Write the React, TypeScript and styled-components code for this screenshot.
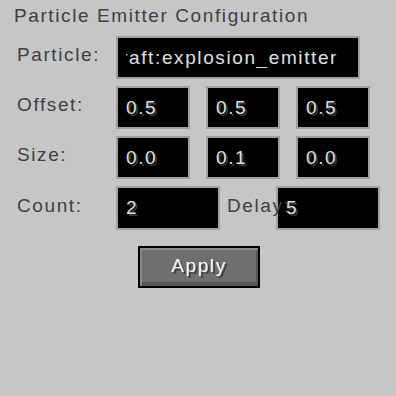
import * as React from "react";
import styled, { createGlobalStyle } from "styled-components";

const GlobalStyle = createGlobalStyle`
  html, body {
    margin: 0;
    padding: 0;
    background: #c6c6c6;
  }
  body {
    font-family: "Liberation Sans", Arial, sans-serif;
  }
`;

const Screen = styled.div`
  width: 396px;
  height: 396px;
  box-sizing: border-box;
  background: #c6c6c6;
  padding: 5px 0 0 14px;
  display: flex;
  flex-direction: column;
  font-family: "Liberation Sans", Arial, sans-serif;
  font-size: 19px;
  letter-spacing: 1.6px;
`;

const Title = styled.div`
  color: #404040;
  line-height: 22px;
  height: 22px;
  white-space: nowrap;
`;

const Form = styled.div`
  margin-top: 9px;
  padding-left: 3px;
  display: flex;
  flex-direction: column;
  gap: 7px;
`;

const Row = styled.div<{ $height?: number }>`
  display: flex;
  align-items: center;
  height: ${(p) => p.$height || 43}px;
`;

const Label = styled.div<{ $width?: number; $overlap?: number; $indent?: number }>`
  width: ${(p) => (p.$width ? `${p.$width}px` : "auto")};
  flex-shrink: 0;
  color: #404040;
  line-height: 20px;
  margin-top: -5px;
  margin-left: ${(p) => p.$indent || 0}px;
  margin-right: ${(p) => (p.$overlap ? -p.$overlap : 0)}px;
  white-space: nowrap;
  position: relative;
  z-index: 1;
`;

const Field = styled.div<{ $width: number; $gap?: number }>`
  box-sizing: border-box;
  width: ${(p) => p.$width}px;
  height: 100%;
  flex-shrink: 0;
  margin-left: ${(p) => p.$gap || 0}px;
  background: #000;
  border: 2px solid #a0a0a0;
  display: flex;
  align-items: center;
  padding: 0 8px;
  overflow: hidden;
`;

const Value = styled.span<{ $shadow?: boolean }>`
  color: #e0e0e0;
  white-space: nowrap;
  line-height: 20px;
  text-shadow: ${(p) => (p.$shadow ? "2px 2px 0 #383838" : "none")};
`;

const Clip = styled.div`
  width: 212px;
  overflow: hidden;
  display: flex;
  justify-content: flex-end;
`;

const ButtonRow = styled.div`
  display: flex;
  padding-left: 124px;
  margin-top: 16px;
`;

const Button = styled.button`
  box-sizing: border-box;
  width: 122px;
  height: 42px;
  border: 2px solid #000;
  background: #6f6f6f;
  box-shadow: inset 2px 2px 0 #8a8a8a, inset -2px -4px 0 #575757;
  color: #ffffff;
  font-family: "Liberation Sans", Arial, sans-serif;
  font-size: 19px;
  letter-spacing: 1.6px;
  text-shadow: 2px 2px 0 #3f3f3f;
  padding: 0 0 2px 0;
  cursor: pointer;
`;

export default function App() {
  return (
    <Screen>
      <GlobalStyle />
      <Title>Particle Emitter Configuration</Title>
      <Form>
        <Row>
          <Label $width={99}>Particle:</Label>
          <Field $width={244}>
            <Clip>
              <Value>minecraft:explosion_emitter</Value>
            </Clip>
          </Field>
        </Row>
        <Row>
          <Label $width={99}>Offset:</Label>
          <Field $width={74}><Value $shadow>0.5</Value></Field>
          <Field $width={74} $gap={16}><Value $shadow>0.5</Value></Field>
          <Field $width={74} $gap={16}><Value $shadow>0.5</Value></Field>
        </Row>
        <Row>
          <Label $width={99}>Size:</Label>
          <Field $width={74}><Value $shadow>0.0</Value></Field>
          <Field $width={74} $gap={16}><Value $shadow>0.1</Value></Field>
          <Field $width={74} $gap={16}><Value $shadow>0.0</Value></Field>
        </Row>
        <Row $height={44}>
          <Label $width={99}>Count:</Label>
          <Field $width={104}><Value $shadow>2</Value></Field>
          <Label $width={56} $overlap={7} $indent={7}>Delay:</Label>
          <Field $width={104}><Value $shadow>5</Value></Field>
        </Row>
      </Form>
      <ButtonRow>
        <Button>Apply</Button>
      </ButtonRow>
    </Screen>
  );
}
